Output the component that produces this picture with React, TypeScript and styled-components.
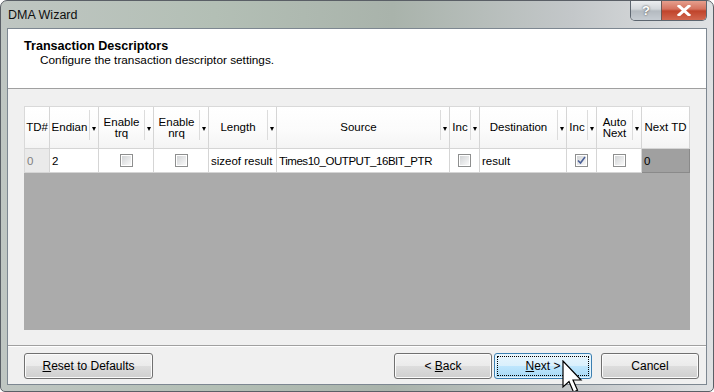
import React from "react";
import styled, { createGlobalStyle } from "styled-components";

const GlobalStyle = createGlobalStyle`
  html, body {
    margin: 0;
    padding: 0;
    background: #ffffff;
  }
  * {
    box-sizing: border-box;
  }
`;

type Column = {
  key: string;
  label: string[];
  width: number;
  sortable: boolean;
};

const columns: Column[] = [
  { key: "td", label: ["TD#"], width: 25, sortable: false },
  { key: "endian", label: ["Endian"], width: 49, sortable: true },
  { key: "trq", label: ["Enable", "trq"], width: 55, sortable: true },
  { key: "nrq", label: ["Enable", "nrq"], width: 55, sortable: true },
  { key: "length", label: ["Length"], width: 68, sortable: true },
  { key: "source", label: ["Source"], width: 173, sortable: true },
  { key: "srcInc", label: ["Inc"], width: 30, sortable: true },
  { key: "dest", label: ["Destination"], width: 87, sortable: true },
  { key: "dstInc", label: ["Inc"], width: 30, sortable: true },
  { key: "auto", label: ["Auto", "Next"], width: 45, sortable: true },
  { key: "next", label: ["Next TD"], width: 48, sortable: false },
];

const template = columns.map((c) => `${c.width}px`).join(" ");

const uiFont = `"Liberation Sans", Arial, sans-serif`;

const Window = styled.div`
  position: relative;
  width: 714px;
  height: 392px;
  display: flex;
  flex-direction: column;
  border-radius: 7px 7px 5px 5px;
  border: 1px solid #5a5f66;
  background: linear-gradient(to right, #bfc6c2 0%, #b3bfb5 30%, #a9b3ab 55%, #c3c7c9 80%, #dfe1e3 100%);
  font-family: ${uiFont};
  font-size: 11.5px;
  color: #000;
  overflow: hidden;
`;

const TitleBar = styled.div`
  height: 27px;
  display: flex;
  align-items: flex-start;
  padding: 0 6px 0 7px;
`;

const Title = styled.div`
  font-family: ${uiFont};
  font-size: 12.5px;
  line-height: 14px;
  padding-top: 7px;
  color: #101010;
  flex: 1;
`;

const CaptionButtons = styled.div`
  display: flex;
  margin-top: -1px;
  border: 1px solid #5d6670;
  border-top: none;
  border-radius: 0 0 5px 5px;
  overflow: hidden;
`;

const CaptionButton = styled.div<{ $close?: boolean }>`
  width: ${(p) => (p.$close ? 45 : 30)}px;
  height: 20px;
  display: flex;
  align-items: center;
  justify-content: center;
  background: ${(p) =>
    p.$close
      ? "linear-gradient(to bottom, #e8a493 0%, #d5735f 45%, #c0442b 55%, #d2674f 100%)"
      : "linear-gradient(to bottom, #eef0f2 0%, #d3d7db 45%, #b4bac0 55%, #c6ccd2 100%)"};
  border-left: ${(p) => (p.$close ? "1px solid #6b5955" : "none")};
  color: #fff;
  font-weight: bold;
  font-size: 13px;
  text-shadow: 0 0 2px #333;
`;

const Client = styled.div`
  flex: 1;
  margin: 0 6px 6px 6px;
  border: 1px solid #7d8791;
  background: #f0f0f0;
  display: flex;
  flex-direction: column;
`;

const Banner = styled.div`
  height: 60px;
  background: #ffffff;
  border-bottom: 1px solid #a0a0a0;
  padding: 10px 16px 0 16px;
`;

const BannerTitle = styled.div`
  font-weight: bold;
  font-size: 12.6px;
  line-height: 14px;
`;

const BannerText = styled.div`
  padding-left: 16px;
  font-size: 11.8px;
  line-height: 14px;
`;

const Body = styled.div`
  padding: 17px 16px 0 16px;
`;

const Grid = styled.div`
  height: 224px;
  width: 666px;
  background: #ababab;
  display: flex;
  flex-direction: column;
`;

const Row = styled.div`
  display: grid;
  grid-template-columns: ${template};
`;

const HeaderRow = styled(Row)`
  height: 43px;
  border-top: 1px solid #d9d9d9;
  border-left: 1px solid #d9d9d9;
`;

const HeaderCell = styled.div`
  display: flex;
  align-items: stretch;
  background: linear-gradient(to bottom, #ffffff 0%, #fbfbfb 60%, #f4f4f4 100%);
  border-right: 1px solid #d5d5d5;
  border-bottom: 1px solid #d5d5d5;
`;

const HeaderLabel = styled.div`
  flex: 1;
  display: flex;
  flex-direction: column;
  align-items: center;
  justify-content: center;
  line-height: 11px;
  white-space: nowrap;
  overflow: hidden;
`;

const HeaderSep = styled.div`
  width: 1px;
  margin: 3px 0 8px;
  background: #dcdcdc;
`;

const SortArrow = styled.div`
  width: 8px;
  display: flex;
  align-items: center;
  justify-content: center;
  &::after {
    content: "";
    border-left: 2.5px solid transparent;
    border-right: 2.5px solid transparent;
    border-top: 4px solid #000;
    margin-top: 2px;
  }
`;

const DataRow = styled(Row)`
  height: 24px;
  border-left: 1px solid #d9d9d9;
`;

type Tone = "white" | "index" | "dark";

const Cell = styled.div<{ $tone?: Tone; $center?: boolean }>`
  display: flex;
  align-items: center;
  justify-content: ${(p) => (p.$center ? "center" : "flex-start")};
  padding: 0 2px;
  white-space: nowrap;
  overflow: hidden;
  border-right: 1px solid ${(p) => (p.$tone === "dark" ? "#8a8a8a" : "#d5d5d5")};
  border-bottom: 1px solid ${(p) => (p.$tone === "dark" ? "#8a8a8a" : "#d5d5d5")};
  background: ${(p) =>
    p.$tone === "index" ? "#eaeaea" : p.$tone === "dark" ? "#a0a0a0" : "#ffffff"};
  color: ${(p) => (p.$tone === "index" ? "#808080" : "#000")};
`;

const Narrow = styled.span`
  letter-spacing: -0.45px;
`;

const Check = styled.div<{ $checked?: boolean }>`
  width: 13px;
  height: 13px;
  border: 1px solid #8e8f8f;
  background: #fff;
  padding: 1px;
  & > div {
    width: 100%;
    height: 100%;
    background: linear-gradient(135deg, #d2d4d6 0%, #e9eaeb 60%, #f9f9f9 100%);
    display: flex;
    align-items: center;
    justify-content: center;
  }
`;

const Divider = styled.div`
  margin-top: 15px;
  border-top: 1px solid #a0a0a0;
  border-bottom: 1px solid #ffffff;
`;

const ButtonBar = styled.div`
  display: flex;
  padding: 6px 7px 0 16px;
`;

const Spacer = styled.div`
  flex: 1;
`;

const Button = styled.div<{ $width: number; $focused?: boolean; $gap?: number }>`
  position: relative;
  width: ${(p) => p.$width}px;
  height: 26px;
  margin-left: ${(p) => p.$gap ?? 0}px;
  border: 1px solid ${(p) => (p.$focused ? "#3c7fb1" : "#707070")};
  border-radius: 3px;
  display: flex;
  align-items: center;
  justify-content: center;
  font-size: 12px;
  padding-bottom: 1px;
  box-shadow: inset 0 0 0 1px ${(p) => (p.$focused ? "#e6f5fd" : "#fbfbfb")};
  background: ${(p) =>
    p.$focused
      ? "linear-gradient(to bottom, #eaf6fd 0%, #d9f0fc 50%, #bee6fd 51%, #a7d9f5 100%)"
      : "linear-gradient(to bottom, #f2f2f2 0%, #ebebeb 50%, #dddddd 51%, #cfcfcf 100%)"};
  &::after {
    content: "";
    display: ${(p) => (p.$focused ? "block" : "none")};
    position: absolute;
    inset: 2px;
    border: 1px dotted #000;
  }
  u {
    text-decoration: underline;
    text-underline-offset: 1px;
  }
`;

const Cursor = styled.svg`
  position: absolute;
  left: 561px;
  top: 359px;
`;

const CheckBox: React.FC<{ checked?: boolean }> = ({ checked }) => (
  <Check $checked={checked}>
    <div>
      {checked && (
        <svg width="9" height="9" viewBox="0 0 9 9">
          <path d="M1 4.5 L3.5 7 L8 1" fill="none" stroke="#4a5f97" strokeWidth="1.6" />
        </svg>
      )}
    </div>
  </Check>
);

function renderCell(key: string) {
  switch (key) {
    case "td":
      return <Cell key={key} $tone="index">0</Cell>;
    case "endian":
      return <Cell key={key}>2</Cell>;
    case "length":
      return <Cell key={key}>sizeof result</Cell>;
    case "source":
      return (
        <Cell key={key}>
          <Narrow>Times10_OUTPUT_16BIT_PTR</Narrow>
        </Cell>
      );
    case "dest":
      return <Cell key={key}>result</Cell>;
    case "next":
      return <Cell key={key} $tone="dark">0</Cell>;
    default:
      return (
        <Cell key={key} $center>
          <CheckBox checked={key === "dstInc"} />
        </Cell>
      );
  }
}

export default function App() {
  return (
    <>
      <GlobalStyle />
      <Window>
        <TitleBar>
          <Title>DMA Wizard</Title>
          <CaptionButtons>
            <CaptionButton>?</CaptionButton>
            <CaptionButton $close>
              <svg width="14" height="11" viewBox="0 0 14 11">
                <path
                  d="M2 1 L12 10 M12 1 L2 10"
                  stroke="#fff"
                  strokeWidth="3"
                  strokeLinecap="square"
                />
              </svg>
            </CaptionButton>
          </CaptionButtons>
        </TitleBar>
        <Client>
          <Banner>
            <BannerTitle>Transaction Descriptors</BannerTitle>
            <BannerText>Configure the transaction descriptor settings.</BannerText>
          </Banner>
          <Body>
            <Grid>
              <HeaderRow>
                {columns.map((col) => (
                  <HeaderCell key={col.key}>
                    <HeaderLabel>
                      {col.label.map((line) => (
                        <span key={line}>{line}</span>
                      ))}
                    </HeaderLabel>
                    {col.sortable && (
                      <>
                        <HeaderSep />
                        <SortArrow />
                      </>
                    )}
                  </HeaderCell>
                ))}
              </HeaderRow>
              <DataRow>{columns.map((col) => renderCell(col.key))}</DataRow>
            </Grid>
          </Body>
          <Divider />
          <ButtonBar>
            <Button $width={129}>
              <span>
                <u>R</u>eset to Defaults
              </span>
            </Button>
            <Spacer />
            <Button $width={98}>
              <span>
                &lt; <u>B</u>ack
              </span>
            </Button>
            <Button $width={98} $gap={2} $focused>
              <span>
                <u>N</u>ext &gt;
              </span>
            </Button>
            <Button $width={98} $gap={9}>
              <span>Cancel</span>
            </Button>
          </ButtonBar>
        </Client>
        <Cursor width="24" height="34" viewBox="0 0 24 34">
          <path
            d="M1 1 L1 27 L7 21.5 L11.5 32 L15.5 30.3 L11 20 L19 20 Z"
            fill="#fff"
            stroke="#000"
            strokeWidth="1.2"
            strokeLinejoin="miter"
          />
        </Cursor>
      </Window>
    </>
  );
}
